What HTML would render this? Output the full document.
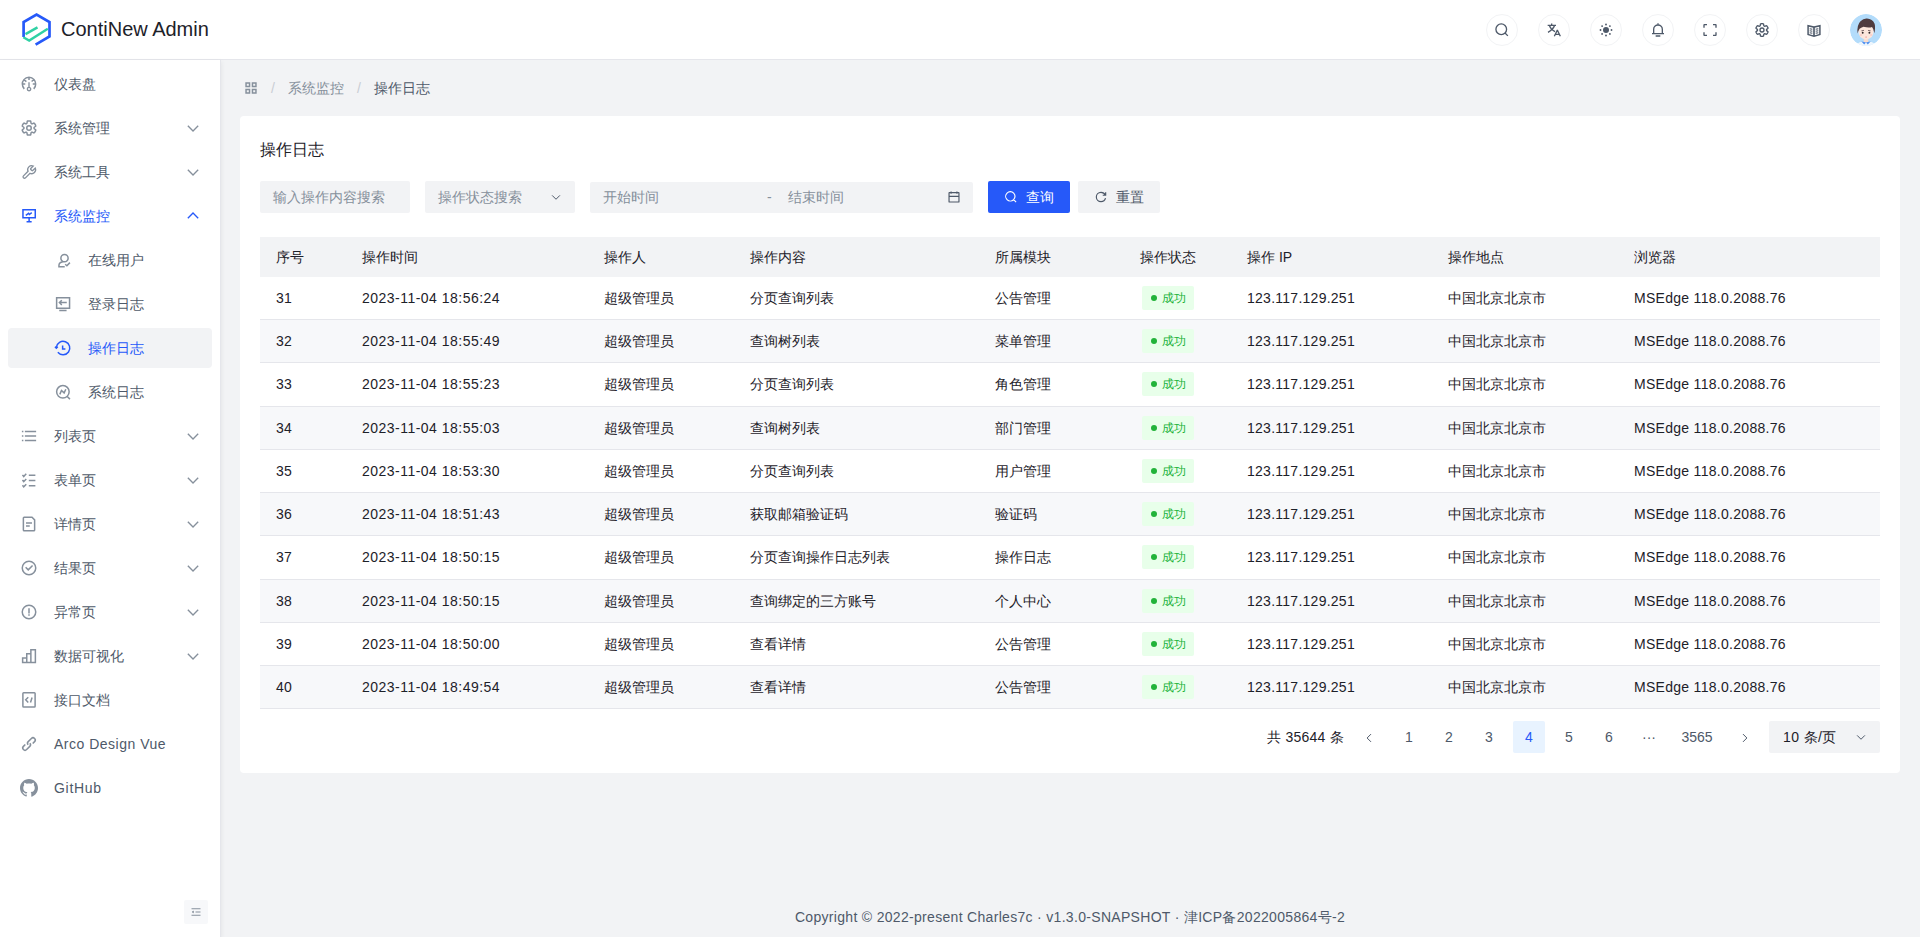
<!DOCTYPE html>
<html><head><meta charset="utf-8">
<style>
*{box-sizing:border-box;margin:0;padding:0}
html,body{width:1920px;height:937px;overflow:hidden;background:#f2f3f5;font-family:"Liberation Sans",sans-serif;font-size:14px;color:#1d2129}
.abs{position:absolute}
svg.ic{position:absolute;fill:none;stroke:currentColor;stroke-width:4}
#header{position:absolute;left:0;top:0;width:1920px;height:60px;background:#fff;border-bottom:1px solid #e5e6eb}
#sider{position:absolute;left:0;top:60px;width:221px;height:877px;background:#fff;box-shadow:0 2px 5px 0 rgba(0,0,0,.08);border-right:1px solid #e5e6eb}
.mi{position:absolute;left:8px;width:204px;height:40px;border-radius:4px;color:#4e5969}
.mi .t{position:absolute;left:46px;top:9px;line-height:22px;white-space:nowrap}
.mi.sub .t{left:80px}
.mi svg.ic{left:12px;top:11px;width:18px;height:18px;color:#86909c}
.mi.sub svg.ic{left:46px}
.mi svg.arr{left:177px;top:12px;width:16px;height:16px;color:#86909c}
.mi.sel{color:#2659f9}
.mi.sel svg.ic,.mi.sel svg.arr{color:#2659f9}
.mi.act{background:#f2f3f5}
.hbtn{position:absolute;top:14px;width:32px;height:32px;border-radius:50%;border:1px solid #f2f3f5;background:#fff;color:#4e5969}
.hbtn svg{position:absolute;left:7px;top:7px;width:16px;height:16px;fill:none;stroke:currentColor;stroke-width:4}
#card{position:absolute;left:240px;top:116px;width:1660px;height:657px;background:#fff;border-radius:4px}
.inp{position:absolute;top:181px;height:32px;background:#f2f3f5;border-radius:2px;color:#86909c}
.inp .t{position:absolute;top:5px;line-height:22px;white-space:nowrap}
.th-t{font-weight:500}
.th{position:absolute;top:237px;height:40px;left:260px;width:1620px;background:#f2f3f5}
.c{position:absolute;white-space:nowrap;line-height:22px}
.row{position:absolute;left:260px;width:1620px;border-bottom:1px solid #e5e6eb}
.row.odd{background:#f7f8fa}
.tag{position:absolute;width:52px;height:24px;background:#e8ffea;color:#22b33a;border-radius:2px;font-size:12px}
.tag i{position:absolute;left:9px;top:9px;width:6px;height:6px;border-radius:50%;background:#22b33a}
.tag span{position:absolute;left:19.5px;top:1px;line-height:22px}
.pg{position:absolute;top:721px;height:32px;line-height:32px;text-align:center;color:#4e5969;border-radius:2px}
</style></head><body>

<div id="header">
  <svg class="abs" style="left:20px;top:11px" width="34" height="37" viewBox="20 11 34 37">
    <path d="M23.6 37 V22.1 L36.55 14.6 L49.5 22.1 V36.5 L35.6 44.6" fill="none" stroke="#2659f9" stroke-width="2.7" stroke-linejoin="miter"/>
    <path d="M23.3 37.3 L29.2 40.5 L47.8 28.7" fill="none" stroke="#2fd1a4" stroke-width="2.4"/>
    <path d="M25.5 34.1 L37.5 27.4" fill="none" stroke="#2fd1a4" stroke-width="2.4"/>
  </svg>
  <div class="abs" style="left:61px;top:16px;font-size:20px;line-height:26px;color:#1d2129">ContiNew Admin</div>

  <div class="hbtn" style="left:1486px"><svg viewBox="0 0 48 48"><path d="M33.072 33.071c6.248-6.248 6.248-16.379 0-22.627-6.249-6.249-16.38-6.249-22.628 0-6.248 6.248-6.248 16.379 0 22.627 6.248 6.248 16.38 6.248 22.628 0Zm0 0 8.485 8.485"/></svg></div>
  <div class="hbtn" style="left:1538px"><svg viewBox="0 0 48 48"><path d="M17 4.5v5.5M5 10h25M10 10c2.5 8 8 14 17 19M26 10c-3 9-9 15-20 21M25 43l8.5-17.5h1L43 43M28.5 37h11"/></svg></div>
  <div class="hbtn" style="left:1590px"><svg viewBox="0 0 48 48"><g style="stroke:none;fill:currentColor"><circle cx="24" cy="24" r="9"/><circle cx="24" cy="7.5" r="2.8"/><circle cx="24" cy="40.5" r="2.8"/><circle cx="7.5" cy="24" r="2.8"/><circle cx="40.5" cy="24" r="2.8"/><circle cx="12.3" cy="12.3" r="2.8"/><circle cx="35.7" cy="12.3" r="2.8"/><circle cx="12.3" cy="35.7" r="2.8"/><circle cx="35.7" cy="35.7" r="2.8"/></g></svg></div>
  <div class="hbtn" style="left:1642px"><svg viewBox="0 0 48 48"><path d="M24 9c7.18 0 13 5.82 13 13v13H11V22c0-7.18 5.82-13 13-13Zm0 0V4M6 35h36m-25 7h14"/></svg></div>
  <div class="hbtn" style="left:1694px"><svg viewBox="0 0 48 48"><path d="M42 17V9a1 1 0 0 0-1-1h-8M6 17V9a1 1 0 0 1 1-1h8m27 23v8a1 1 0 0 1-1 1h-8M6 31v8a1 1 0 0 0 1 1h8"/></svg></div>
  <div class="hbtn" style="left:1746px"><svg viewBox="0 0 48 48"><path d="M24.0 5.1 L24.7 5.1 L25.3 5.1 L26.0 5.2 L26.6 5.3 L27.3 5.4 L27.9 5.5 L28.5 5.9 L28.8 7.3 L29.0 8.5 L29.2 9.8 L29.3 10.8 L29.6 11.5 L30.0 11.7 L30.4 11.9 L30.9 12.1 L31.3 12.4 L31.7 12.6 L32.1 12.9 L32.7 12.8 L33.7 12.4 L34.9 11.9 L36.1 11.5 L37.4 11.1 L38.0 11.4 L38.5 11.9 L38.9 12.4 L39.3 12.9 L39.7 13.4 L40.0 14.0 L40.4 14.5 L40.7 15.1 L41.0 15.7 L41.3 16.3 L41.5 16.9 L41.8 17.5 L42.0 18.2 L41.9 18.9 L40.9 19.8 L39.9 20.6 L38.9 21.4 L38.1 22.0 L37.6 22.6 L37.7 23.0 L37.7 23.5 L37.7 24.0 L37.7 24.5 L37.7 25.0 L37.6 25.4 L38.1 26.0 L38.9 26.6 L39.9 27.4 L40.9 28.2 L41.9 29.1 L42.0 29.8 L41.8 30.5 L41.5 31.1 L41.3 31.7 L41.0 32.3 L40.7 32.9 L40.4 33.4 L40.0 34.0 L39.7 34.6 L39.3 35.1 L38.9 35.6 L38.5 36.1 L38.0 36.6 L37.4 36.9 L36.1 36.5 L34.9 36.1 L33.7 35.6 L32.7 35.2 L32.1 35.1 L31.7 35.4 L31.3 35.6 L30.9 35.9 L30.4 36.1 L30.0 36.3 L29.6 36.5 L29.3 37.2 L29.2 38.2 L29.0 39.5 L28.8 40.7 L28.5 42.1 L27.9 42.5 L27.3 42.6 L26.6 42.7 L26.0 42.8 L25.3 42.9 L24.7 42.9 L24.0 42.9 L23.3 42.9 L22.7 42.9 L22.0 42.8 L21.4 42.7 L20.7 42.6 L20.1 42.5 L19.5 42.1 L19.2 40.7 L19.0 39.5 L18.8 38.2 L18.7 37.2 L18.4 36.5 L18.0 36.3 L17.6 36.1 L17.1 35.9 L16.7 35.6 L16.3 35.4 L15.9 35.1 L15.3 35.2 L14.3 35.6 L13.1 36.1 L11.9 36.5 L10.6 36.9 L10.0 36.6 L9.5 36.1 L9.1 35.6 L8.7 35.1 L8.3 34.6 L8.0 34.0 L7.6 33.5 L7.3 32.9 L7.0 32.3 L6.7 31.7 L6.5 31.1 L6.2 30.5 L6.0 29.8 L6.1 29.1 L7.1 28.2 L8.1 27.4 L9.1 26.6 L9.9 26.0 L10.4 25.4 L10.3 25.0 L10.3 24.5 L10.3 24.0 L10.3 23.5 L10.3 23.0 L10.4 22.6 L9.9 22.0 L9.1 21.4 L8.1 20.6 L7.1 19.8 L6.1 18.9 L6.0 18.2 L6.2 17.5 L6.5 16.9 L6.7 16.3 L7.0 15.7 L7.3 15.1 L7.6 14.5 L8.0 14.0 L8.3 13.4 L8.7 12.9 L9.1 12.4 L9.5 11.9 L10.0 11.4 L10.6 11.1 L11.9 11.5 L13.1 11.9 L14.3 12.4 L15.3 12.8 L15.9 12.9 L16.3 12.6 L16.7 12.4 L17.1 12.1 L17.6 11.9 L18.0 11.7 L18.4 11.5 L18.7 10.8 L18.8 9.8 L19.0 8.5 L19.2 7.3 L19.5 5.9 L20.1 5.5 L20.7 5.4 L21.4 5.3 L22.0 5.2 L22.7 5.1 L23.3 5.1Z"/><circle cx="24" cy="24" r="6"/></svg></div>
  <div class="hbtn" style="left:1798px"><svg viewBox="0 0 48 48"><path style="stroke:none;fill:currentColor" d="M4 8l20 5 20-5v31l-20 6-20-6Z"/><path style="stroke:#fff;stroke-width:0;fill:#fff" d="M8.5 14l13 3.5v22l-13-3.5ZM39.5 14l-13 3.5v22l13-3.5Z"/><path style="stroke-width:3.2" d="M11 20l8 2M11 26l8 2M11 32l8 2M37 20l-8 2M37 26l-8 2M37 32l-8 2"/></svg></div>
  <svg class="abs" style="left:1850px;top:14px" width="32" height="32" viewBox="0 0 32 32">
    <defs><clipPath id="avc"><circle cx="16" cy="16" r="16"/></clipPath></defs>
    <g clip-path="url(#avc)">
    <circle cx="16" cy="16" r="16" fill="#b3dcfb"/>
    <path d="M5 34 Q6 29 12 27.5 L16 28.5 L20 27.5 Q26 29 27 34Z" fill="#eef6fd"/>
    <rect x="13.8" y="23" width="4.4" height="5.5" fill="#f9dccd"/>
    <path d="M11.2 27.3 L16 28.6 L14.2 30.4Z M20.8 27.3 L16 28.6 L17.8 30.4Z" fill="#4f8ff0"/>
    <path d="M8.4 17 Q8.2 24 16 25.8 Q23.8 24 23.6 17 Q23.6 11 16 11 Q8.4 11 8.4 17Z" fill="#fce6dc"/>
    <path d="M7.6 19.5 Q6.6 11 10.5 7.2 Q13.5 4.3 17 4.6 Q22.5 5 24.6 9.8 Q25.6 13 24.4 19.2 Q23.6 14.6 22 13 Q19 14.3 13.5 12.8 Q10.8 14 9.6 14.8 Q8.4 16.5 7.6 19.5Z" fill="#4f3b3f"/>
    <path d="M11.4 16.8 L14 16.4 M18 16.4 L20.6 16.8" stroke="#4f3b3f" stroke-width="0.7"/>
    <circle cx="12.7" cy="18.7" r="0.95" fill="#2f2424"/><circle cx="19.4" cy="18.7" r="0.95" fill="#2f2424"/>
    <ellipse cx="11" cy="21" rx="1.3" ry="0.7" fill="#f7c6c4"/><ellipse cx="21.1" cy="21" rx="1.3" ry="0.7" fill="#f7c6c4"/>
    <ellipse cx="16.1" cy="23" rx="0.9" ry="0.55" fill="#f08d8d"/>
    </g>
  </svg>
</div>

<div id="sider"></div>
<div id="menu">
<div class="mi " style="top:64px"><svg class="ic" viewBox="0 0 48 48"><path d="M41.808 24c.118 4.63-1.486 9.333-5.21 13m5.21-13H34m7.808 0c-.112-4.38-1.767-8.694-4.627-12M24 6c5.531 0 10.07 2.404 13.18 6M24 6c-5.724 0-10.384 2.574-13.5 6.38M24 6v7.5M37.18 12 31 17.5m-20.5-5.12L17 17.5m-6.5-5.12C7.49 16.062 6 20.02 6.19 24M6.19 24H14m-7.81 0c.118 4.63 1.67 9.334 5.21 13"/><path d="M24 42a4.5 4.5 0 1 0 0-9 4.5 4.5 0 0 0 0 9Zm0-9V19" style="stroke-width:3.6"/></svg><div class="t" style="letter-spacing:0">仪表盘</div></div>
<div class="mi " style="top:108px"><svg class="ic" viewBox="0 0 48 48"><path d="M24.0 5.1 L24.7 5.1 L25.3 5.1 L26.0 5.2 L26.6 5.3 L27.3 5.4 L27.9 5.5 L28.5 5.9 L28.8 7.3 L29.0 8.5 L29.2 9.8 L29.3 10.8 L29.6 11.5 L30.0 11.7 L30.4 11.9 L30.9 12.1 L31.3 12.4 L31.7 12.6 L32.1 12.9 L32.7 12.8 L33.7 12.4 L34.9 11.9 L36.1 11.5 L37.4 11.1 L38.0 11.4 L38.5 11.9 L38.9 12.4 L39.3 12.9 L39.7 13.4 L40.0 14.0 L40.4 14.5 L40.7 15.1 L41.0 15.7 L41.3 16.3 L41.5 16.9 L41.8 17.5 L42.0 18.2 L41.9 18.9 L40.9 19.8 L39.9 20.6 L38.9 21.4 L38.1 22.0 L37.6 22.6 L37.7 23.0 L37.7 23.5 L37.7 24.0 L37.7 24.5 L37.7 25.0 L37.6 25.4 L38.1 26.0 L38.9 26.6 L39.9 27.4 L40.9 28.2 L41.9 29.1 L42.0 29.8 L41.8 30.5 L41.5 31.1 L41.3 31.7 L41.0 32.3 L40.7 32.9 L40.4 33.4 L40.0 34.0 L39.7 34.6 L39.3 35.1 L38.9 35.6 L38.5 36.1 L38.0 36.6 L37.4 36.9 L36.1 36.5 L34.9 36.1 L33.7 35.6 L32.7 35.2 L32.1 35.1 L31.7 35.4 L31.3 35.6 L30.9 35.9 L30.4 36.1 L30.0 36.3 L29.6 36.5 L29.3 37.2 L29.2 38.2 L29.0 39.5 L28.8 40.7 L28.5 42.1 L27.9 42.5 L27.3 42.6 L26.6 42.7 L26.0 42.8 L25.3 42.9 L24.7 42.9 L24.0 42.9 L23.3 42.9 L22.7 42.9 L22.0 42.8 L21.4 42.7 L20.7 42.6 L20.1 42.5 L19.5 42.1 L19.2 40.7 L19.0 39.5 L18.8 38.2 L18.7 37.2 L18.4 36.5 L18.0 36.3 L17.6 36.1 L17.1 35.9 L16.7 35.6 L16.3 35.4 L15.9 35.1 L15.3 35.2 L14.3 35.6 L13.1 36.1 L11.9 36.5 L10.6 36.9 L10.0 36.6 L9.5 36.1 L9.1 35.6 L8.7 35.1 L8.3 34.6 L8.0 34.0 L7.6 33.5 L7.3 32.9 L7.0 32.3 L6.7 31.7 L6.5 31.1 L6.2 30.5 L6.0 29.8 L6.1 29.1 L7.1 28.2 L8.1 27.4 L9.1 26.6 L9.9 26.0 L10.4 25.4 L10.3 25.0 L10.3 24.5 L10.3 24.0 L10.3 23.5 L10.3 23.0 L10.4 22.6 L9.9 22.0 L9.1 21.4 L8.1 20.6 L7.1 19.8 L6.1 18.9 L6.0 18.2 L6.2 17.5 L6.5 16.9 L6.7 16.3 L7.0 15.7 L7.3 15.1 L7.6 14.5 L8.0 14.0 L8.3 13.4 L8.7 12.9 L9.1 12.4 L9.5 11.9 L10.0 11.4 L10.6 11.1 L11.9 11.5 L13.1 11.9 L14.3 12.4 L15.3 12.8 L15.9 12.9 L16.3 12.6 L16.7 12.4 L17.1 12.1 L17.6 11.9 L18.0 11.7 L18.4 11.5 L18.7 10.8 L18.8 9.8 L19.0 8.5 L19.2 7.3 L19.5 5.9 L20.1 5.5 L20.7 5.4 L21.4 5.3 L22.0 5.2 L22.7 5.1 L23.3 5.1Z"/><circle cx="24" cy="24" r="6"/></svg><div class="t" style="letter-spacing:0">系统管理</div><svg class="ic arr" viewBox="0 0 48 48"><path d="M39.6 17.443 24.043 33 8.487 17.443"/></svg></div>
<div class="mi " style="top:152px"><svg class="ic" viewBox="0 0 48 48"><path transform="translate(24 24) scale(.88) translate(-24 -23)" d="M29.4 12.6a2 2 0 0 0 0 2.8l3.2 3.2a2 2 0 0 0 2.8 0l7.54-7.54a12 12 0 0 1-15.88 15.88L13.24 40.76a4.24 4.24 0 0 1-6-6L21.06 20.94A12 12 0 0 1 36.94 5.06L29.42 12.58Z"/></svg><div class="t" style="letter-spacing:0">系统工具</div><svg class="ic arr" viewBox="0 0 48 48"><path d="M39.6 17.443 24.043 33 8.487 17.443"/></svg></div>
<div class="mi sel" style="top:196px"><svg class="ic" viewBox="0 0 48 48"><path d="M7.9 7.3h32.8v21.4H7.9zM24.3 28.7v10.5M17.5 39.2h13.6M15.5 22.2l7.4-5.2 2.2 3 6.2-4.8"/></svg><div class="t" style="letter-spacing:0">系统监控</div><svg class="ic arr" viewBox="0 0 48 48"><path d="M39.6 30.557 24.043 15 8.487 30.557"/></svg></div>
<div class="mi sub" style="top:240px"><svg class="ic" viewBox="0 0 48 48"><path d="M18.3 19.2a9.7 9.7 0 1 0 19.4 0a9.7 9.7 0 1 0-19.4 0M23.5 28.8C17 30 13.2 34.5 13.2 38.5V42.2H28.6M29.8 35.2l4.6 4.2 8-8.4"/></svg><div class="t" style="letter-spacing:0">在线用户</div></div>
<div class="mi sub" style="top:284px"><svg class="ic" viewBox="0 0 48 48"><path d="M7 7.5h34.5v27.5H7zM14 41h19.5M34 20.2H15M20.8 13.8l-6.4 6.4 6.4 6.4"/></svg><div class="t" style="letter-spacing:0">登录日志</div></div>
<div class="mi sub sel act" style="top:328px"><svg class="ic" viewBox="0 0 48 48"><path d="M6.2 22.2A18 18 0 1 1 10.2 35.6M2.6 20.4l3.6 4.2 3.8-4.2M23 17.2v9.4h7.4"/></svg><div class="t" style="letter-spacing:0">操作日志</div></div>
<div class="mi sub" style="top:372px"><svg class="ic" viewBox="0 0 48 48"><path d="M7 23.5a16.7 16.7 0 1 0 33.4 0a16.7 16.7 0 1 0-33.4 0M36 36.5l6.5 6.5M15.5 30.4l4.5-10.4 7 6.4 4.5-9.6"/></svg><div class="t" style="letter-spacing:0">系统日志</div></div>
<div class="mi " style="top:416px"><svg class="ic" viewBox="0 0 48 48"><path d="M13 24h30M5 12h4m4 24h30M13 12h30M5 24h4M5 36h4"/></svg><div class="t" style="letter-spacing:0">列表页</div><svg class="ic arr" viewBox="0 0 48 48"><path d="M39.6 17.443 24.043 33 8.487 17.443"/></svg></div>
<div class="mi " style="top:460px"><svg class="ic" viewBox="0 0 48 48"><path d="M23.5 11.5h17.5M23.5 25.3h17.5M23.5 39.1h17.5M6.6 10.4l3.3 4.3 6.8-7.2M6.6 24.2l3.3 4.3 6.8-7.2M6.6 38l3.3 4.3 6.8-7.2"/></svg><div class="t" style="letter-spacing:0">表单页</div><svg class="ic arr" viewBox="0 0 48 48"><path d="M39.6 17.443 24.043 33 8.487 17.443"/></svg></div>
<div class="mi " style="top:504px"><svg class="ic" viewBox="0 0 48 48"><path d="M16 21h16m-16 8h10m11 13H11a2 2 0 0 1-2-2V8a2 2 0 0 1 2-2h21l7 7v27a2 2 0 0 1-2 2Z"/></svg><div class="t" style="letter-spacing:0">详情页</div><svg class="ic arr" viewBox="0 0 48 48"><path d="M39.6 17.443 24.043 33 8.487 17.443"/></svg></div>
<div class="mi " style="top:548px"><svg class="ic" viewBox="0 0 48 48"><path d="m15 22 7 7 11.5-11.5M42 24c0 9.941-8.059 18-18 18S6 33.941 6 24 14.059 6 24 6s18 8.059 18 18Z"/></svg><div class="t" style="letter-spacing:0">结果页</div><svg class="ic arr" viewBox="0 0 48 48"><path d="M39.6 17.443 24.043 33 8.487 17.443"/></svg></div>
<div class="mi " style="top:592px"><svg class="ic" viewBox="0 0 48 48"><path d="M24 28V14m0 16v4M6 24c0-9.941 8.059-18 18-18s18 8.059 18 18-8.059 18-18 18S6 33.941 6 24Z"/></svg><div class="t" style="letter-spacing:0">异常页</div><svg class="ic arr" viewBox="0 0 48 48"><path d="M39.6 17.443 24.043 33 8.487 17.443"/></svg></div>
<div class="mi " style="top:636px"><svg class="ic" viewBox="0 0 48 48"><path d="M41 7H29v34h12V7ZM29 18H18v23h11V18ZM18 29H7v12h11V29Z"/></svg><div class="t" style="letter-spacing:0">数据可视化</div><svg class="ic arr" viewBox="0 0 48 48"><path d="M39.6 17.443 24.043 33 8.487 17.443"/></svg></div>
<div class="mi " style="top:680px"><svg class="ic" viewBox="0 0 48 48"><path d="M7.7 6.9a2 2 0 0 1 2-2h28.6a2 2 0 0 1 2 2v33.6a2 2 0 0 1-2 2H9.7a2 2 0 0 1-2-2ZM22 16.5l-6.8 7 6.8 7.2M32.2 17.3l-4.2 13.4"/></svg><div class="t" style="letter-spacing:0">接口文档</div></div>
<div class="mi " style="top:724px"><svg class="ic" viewBox="0 0 48 48"><path d="m14.1 25.414-4.95 4.95a6 6 0 0 0 8.486 8.485l8.485-8.485a6 6 0 0 0 0-8.485m7.779.707 4.95-4.95a6 6 0 1 0-8.486-8.485l-8.485 8.485a6 6 0 0 0 0 8.485"/></svg><div class="t" style="letter-spacing:.5px">Arco Design Vue</div></div>
<div class="mi " style="top:768px"><svg class="ic" style="stroke:none;fill:currentColor;left:12px;top:11px;width:18px;height:18px" viewBox="4 4 40 40"><path d="M24 4C12.95 4 4 12.95 4 24c0 8.84 5.73 16.34 13.68 18.99 1 .18 1.37-.43 1.37-.96v-3.39c-5.56 1.2-6.73-2.36-6.73-2.36-.91-2.31-2.22-2.93-2.22-2.93-1.82-1.24.14-1.22.14-1.22 2 .14 3.06 2.06 3.06 2.06 1.78 3.06 4.68 2.17 5.82 1.66.18-1.29.7-2.17 1.27-2.67-4.44-.5-9.11-2.22-9.11-9.88 0-2.18.78-3.97 2.06-5.37-.21-.5-.89-2.54.2-5.29 0 0 1.68-.54 5.5 2.05 1.6-.44 3.31-.67 5.01-.67 1.7 0 3.41.23 5.01.67 3.82-2.59 5.5-2.05 5.5-2.05 1.09 2.75.4 4.79.2 5.29 1.28 1.4 2.06 3.19 2.06 5.37 0 7.68-4.68 9.37-9.13 9.87.72.62 1.36 1.84 1.36 3.71v5.5c0 .53.36 1.15 1.38.96C38.28 40.33 44 32.84 44 24 44 12.95 35.05 4 24 4Z"/></svg><div class="t" style="letter-spacing:.7px">GitHub</div></div>
<div class="abs" style="left:184px;top:900px;width:24px;height:24px;background:#f7f8fa;border-radius:2px"><svg class="ic" viewBox="0 0 48 48" style="left:6px;top:6px;width:12px;height:12px;color:#86909c"><path d="M42 11H6M42 24H22M42 37H6M13.66 26.912l-4.82-3.118 4.82-3.118v6.236Z"/></svg></div>
</div><!--endmenu-->

<!-- breadcrumb -->
<svg class="ic" style="left:244px;top:81px;width:14px;height:14px;color:#86909c;stroke-width:5" viewBox="0 0 48 48"><path d="M7 7h12v12H7zM29 7h12v12H29zM7 29h12v12H7zM29 29h12v12H29z"/></svg>
<div class="c" style="left:271px;top:77px;color:#c9cdd4">/</div>
<div class="c" style="left:288px;top:77px;color:#86909c">系统监控</div>
<div class="c" style="left:357px;top:77px;color:#c9cdd4">/</div>
<div class="c" style="left:374px;top:77px;color:#4e5969">操作日志</div>

<div id="card"></div>
<div class="c" style="left:260px;top:138px;font-size:16px;line-height:24px;color:#1d2129">操作日志</div>

<!--table-->
<div class="inp" style="left:260px;width:150px"><div class="t" style="left:13px">输入操作内容搜索</div></div>
<div class="inp" style="left:425px;width:150px"><div class="t" style="left:13px">操作状态搜索</div><svg class="ic" viewBox="0 0 48 48" style="left:125px;top:10px;width:12px;height:12px;color:#4e5969"><path d="M39.6 17.443 24.043 33 8.487 17.443"/></svg></div>
<div class="inp" style="left:590px;width:383px;top:182px;height:31px"><div class="t" style="left:13px;top:4px">开始时间</div><div class="t" style="left:177px;top:4px">-</div><div class="t" style="left:198px;top:4px">结束时间</div><svg class="ic" viewBox="0 0 48 48" style="left:357px;top:8px;width:14px;height:14px;color:#4e5969"><path d="M7 22h34M14 5v8m20-8v8M8 41h32a1 1 0 0 0 1-1V10a1 1 0 0 0-1-1H8a1 1 0 0 0-1 1v30a1 1 0 0 0 1 1Z"/></svg></div>
<div class="abs" style="left:988px;top:181px;width:82px;height:32px;background:#2659f9;border-radius:2px;color:#fff"><svg class="ic" viewBox="0 0 48 48" style="left:16px;top:9px;width:14px;height:14px"><path d="M33.072 33.071c6.248-6.248 6.248-16.379 0-22.627-6.249-6.249-16.38-6.249-22.628 0-6.248 6.248-6.248 16.379 0 22.627 6.248 6.248 16.38 6.248 22.628 0Zm0 0 8.485 8.485"/></svg><div class="c" style="left:38px;top:5px">查询</div></div>
<div class="abs" style="left:1078px;top:181px;width:82px;height:32px;background:#f2f3f5;border-radius:2px;color:#4e5969"><svg class="ic" viewBox="0 0 48 48" style="left:16px;top:9px;width:14px;height:14px"><path d="M38.837 18C36.463 12.136 30.715 8 24 8 15.163 8 8 15.163 8 24s7.163 16 16 16c7.455 0 13.72-5.1 15.496-12M40 8v10H30"/></svg><div class="c" style="left:38px;top:5px">重置</div></div>
<div class="th"></div>
<div class="c th-t" style="left:276px;top:246px">序号</div>
<div class="c th-t" style="left:362px;top:246px">操作时间</div>
<div class="c th-t" style="left:604px;top:246px">操作人</div>
<div class="c th-t" style="left:750px;top:246px">操作内容</div>
<div class="c th-t" style="left:995px;top:246px">所属模块</div>
<div class="c th-t" style="left:1140px;top:246px">操作状态</div>
<div class="c th-t" style="left:1247px;top:246px">操作 <span style="font-weight:400">IP</span></div>
<div class="c th-t" style="left:1448px;top:246px">操作地点</div>
<div class="c th-t" style="left:1634px;top:246px">浏览器</div>
<div class="row" style="top:277.00px;height:43.22px"></div>
<div class="c td" style="left:276px;top:287.00px;letter-spacing:.3px">31</div>
<div class="c td" style="left:362px;top:287.00px;letter-spacing:.48px">2023-11-04 18:56:24</div>
<div class="c td" style="left:604px;top:287.00px;letter-spacing:0">超级管理员</div>
<div class="c td" style="left:750px;top:287.00px;letter-spacing:0">分页查询列表</div>
<div class="c td" style="left:995px;top:287.00px;letter-spacing:0">公告管理</div>
<div class="tag" style="left:1142px;top:286.00px"><i></i><span>成功</span></div>
<div class="c td" style="left:1247px;top:287.00px;letter-spacing:.26px">123.117.129.251</div>
<div class="c td" style="left:1448px;top:287.00px;letter-spacing:0">中国北京北京市</div>
<div class="c td" style="left:1634px;top:287.00px;letter-spacing:.29px">MSEdge 118.0.2088.76</div>
<div class="row odd" style="top:320.22px;height:43.22px"></div>
<div class="c td" style="left:276px;top:330.22px;letter-spacing:.3px">32</div>
<div class="c td" style="left:362px;top:330.22px;letter-spacing:.48px">2023-11-04 18:55:49</div>
<div class="c td" style="left:604px;top:330.22px;letter-spacing:0">超级管理员</div>
<div class="c td" style="left:750px;top:330.22px;letter-spacing:0">查询树列表</div>
<div class="c td" style="left:995px;top:330.22px;letter-spacing:0">菜单管理</div>
<div class="tag" style="left:1142px;top:329.22px"><i></i><span>成功</span></div>
<div class="c td" style="left:1247px;top:330.22px;letter-spacing:.26px">123.117.129.251</div>
<div class="c td" style="left:1448px;top:330.22px;letter-spacing:0">中国北京北京市</div>
<div class="c td" style="left:1634px;top:330.22px;letter-spacing:.29px">MSEdge 118.0.2088.76</div>
<div class="row" style="top:363.44px;height:43.22px"></div>
<div class="c td" style="left:276px;top:373.44px;letter-spacing:.3px">33</div>
<div class="c td" style="left:362px;top:373.44px;letter-spacing:.48px">2023-11-04 18:55:23</div>
<div class="c td" style="left:604px;top:373.44px;letter-spacing:0">超级管理员</div>
<div class="c td" style="left:750px;top:373.44px;letter-spacing:0">分页查询列表</div>
<div class="c td" style="left:995px;top:373.44px;letter-spacing:0">角色管理</div>
<div class="tag" style="left:1142px;top:372.44px"><i></i><span>成功</span></div>
<div class="c td" style="left:1247px;top:373.44px;letter-spacing:.26px">123.117.129.251</div>
<div class="c td" style="left:1448px;top:373.44px;letter-spacing:0">中国北京北京市</div>
<div class="c td" style="left:1634px;top:373.44px;letter-spacing:.29px">MSEdge 118.0.2088.76</div>
<div class="row odd" style="top:406.66px;height:43.22px"></div>
<div class="c td" style="left:276px;top:416.66px;letter-spacing:.3px">34</div>
<div class="c td" style="left:362px;top:416.66px;letter-spacing:.48px">2023-11-04 18:55:03</div>
<div class="c td" style="left:604px;top:416.66px;letter-spacing:0">超级管理员</div>
<div class="c td" style="left:750px;top:416.66px;letter-spacing:0">查询树列表</div>
<div class="c td" style="left:995px;top:416.66px;letter-spacing:0">部门管理</div>
<div class="tag" style="left:1142px;top:415.66px"><i></i><span>成功</span></div>
<div class="c td" style="left:1247px;top:416.66px;letter-spacing:.26px">123.117.129.251</div>
<div class="c td" style="left:1448px;top:416.66px;letter-spacing:0">中国北京北京市</div>
<div class="c td" style="left:1634px;top:416.66px;letter-spacing:.29px">MSEdge 118.0.2088.76</div>
<div class="row" style="top:449.88px;height:43.22px"></div>
<div class="c td" style="left:276px;top:459.88px;letter-spacing:.3px">35</div>
<div class="c td" style="left:362px;top:459.88px;letter-spacing:.48px">2023-11-04 18:53:30</div>
<div class="c td" style="left:604px;top:459.88px;letter-spacing:0">超级管理员</div>
<div class="c td" style="left:750px;top:459.88px;letter-spacing:0">分页查询列表</div>
<div class="c td" style="left:995px;top:459.88px;letter-spacing:0">用户管理</div>
<div class="tag" style="left:1142px;top:458.88px"><i></i><span>成功</span></div>
<div class="c td" style="left:1247px;top:459.88px;letter-spacing:.26px">123.117.129.251</div>
<div class="c td" style="left:1448px;top:459.88px;letter-spacing:0">中国北京北京市</div>
<div class="c td" style="left:1634px;top:459.88px;letter-spacing:.29px">MSEdge 118.0.2088.76</div>
<div class="row odd" style="top:493.10px;height:43.22px"></div>
<div class="c td" style="left:276px;top:503.10px;letter-spacing:.3px">36</div>
<div class="c td" style="left:362px;top:503.10px;letter-spacing:.48px">2023-11-04 18:51:43</div>
<div class="c td" style="left:604px;top:503.10px;letter-spacing:0">超级管理员</div>
<div class="c td" style="left:750px;top:503.10px;letter-spacing:0">获取邮箱验证码</div>
<div class="c td" style="left:995px;top:503.10px;letter-spacing:0">验证码</div>
<div class="tag" style="left:1142px;top:502.10px"><i></i><span>成功</span></div>
<div class="c td" style="left:1247px;top:503.10px;letter-spacing:.26px">123.117.129.251</div>
<div class="c td" style="left:1448px;top:503.10px;letter-spacing:0">中国北京北京市</div>
<div class="c td" style="left:1634px;top:503.10px;letter-spacing:.29px">MSEdge 118.0.2088.76</div>
<div class="row" style="top:536.32px;height:43.22px"></div>
<div class="c td" style="left:276px;top:546.32px;letter-spacing:.3px">37</div>
<div class="c td" style="left:362px;top:546.32px;letter-spacing:.48px">2023-11-04 18:50:15</div>
<div class="c td" style="left:604px;top:546.32px;letter-spacing:0">超级管理员</div>
<div class="c td" style="left:750px;top:546.32px;letter-spacing:0">分页查询操作日志列表</div>
<div class="c td" style="left:995px;top:546.32px;letter-spacing:0">操作日志</div>
<div class="tag" style="left:1142px;top:545.32px"><i></i><span>成功</span></div>
<div class="c td" style="left:1247px;top:546.32px;letter-spacing:.26px">123.117.129.251</div>
<div class="c td" style="left:1448px;top:546.32px;letter-spacing:0">中国北京北京市</div>
<div class="c td" style="left:1634px;top:546.32px;letter-spacing:.29px">MSEdge 118.0.2088.76</div>
<div class="row odd" style="top:579.54px;height:43.22px"></div>
<div class="c td" style="left:276px;top:589.54px;letter-spacing:.3px">38</div>
<div class="c td" style="left:362px;top:589.54px;letter-spacing:.48px">2023-11-04 18:50:15</div>
<div class="c td" style="left:604px;top:589.54px;letter-spacing:0">超级管理员</div>
<div class="c td" style="left:750px;top:589.54px;letter-spacing:0">查询绑定的三方账号</div>
<div class="c td" style="left:995px;top:589.54px;letter-spacing:0">个人中心</div>
<div class="tag" style="left:1142px;top:588.54px"><i></i><span>成功</span></div>
<div class="c td" style="left:1247px;top:589.54px;letter-spacing:.26px">123.117.129.251</div>
<div class="c td" style="left:1448px;top:589.54px;letter-spacing:0">中国北京北京市</div>
<div class="c td" style="left:1634px;top:589.54px;letter-spacing:.29px">MSEdge 118.0.2088.76</div>
<div class="row" style="top:622.76px;height:43.22px"></div>
<div class="c td" style="left:276px;top:632.76px;letter-spacing:.3px">39</div>
<div class="c td" style="left:362px;top:632.76px;letter-spacing:.48px">2023-11-04 18:50:00</div>
<div class="c td" style="left:604px;top:632.76px;letter-spacing:0">超级管理员</div>
<div class="c td" style="left:750px;top:632.76px;letter-spacing:0">查看详情</div>
<div class="c td" style="left:995px;top:632.76px;letter-spacing:0">公告管理</div>
<div class="tag" style="left:1142px;top:631.76px"><i></i><span>成功</span></div>
<div class="c td" style="left:1247px;top:632.76px;letter-spacing:.26px">123.117.129.251</div>
<div class="c td" style="left:1448px;top:632.76px;letter-spacing:0">中国北京北京市</div>
<div class="c td" style="left:1634px;top:632.76px;letter-spacing:.29px">MSEdge 118.0.2088.76</div>
<div class="row odd" style="top:665.98px;height:43.22px"></div>
<div class="c td" style="left:276px;top:675.98px;letter-spacing:.3px">40</div>
<div class="c td" style="left:362px;top:675.98px;letter-spacing:.48px">2023-11-04 18:49:54</div>
<div class="c td" style="left:604px;top:675.98px;letter-spacing:0">超级管理员</div>
<div class="c td" style="left:750px;top:675.98px;letter-spacing:0">查看详情</div>
<div class="c td" style="left:995px;top:675.98px;letter-spacing:0">公告管理</div>
<div class="tag" style="left:1142px;top:674.98px"><i></i><span>成功</span></div>
<div class="c td" style="left:1247px;top:675.98px;letter-spacing:.26px">123.117.129.251</div>
<div class="c td" style="left:1448px;top:675.98px;letter-spacing:0">中国北京北京市</div>
<div class="c td" style="left:1634px;top:675.98px;letter-spacing:.29px">MSEdge 118.0.2088.76</div>
<div class="c" style="left:1267px;top:726px;color:#1d2129"><span style="letter-spacing:.25px">共 35644 条</span></div>
<svg class="ic" viewBox="0 0 48 48" style="left:1363px;top:732px;width:12px;height:12px;color:#4e5969"><path d="M32 8.4 16.444 23.956 32 39.513"/></svg>
<div class="pg" style="left:1393px;width:32px">1</div>
<div class="pg" style="left:1433px;width:32px">2</div>
<div class="pg" style="left:1473px;width:32px">3</div>
<div class="pg" style="left:1513px;width:32px;background:#e8f3ff;color:#2659f9">4</div>
<div class="pg" style="left:1553px;width:32px">5</div>
<div class="pg" style="left:1593px;width:32px">6</div>
<div class="pg" style="left:1633px;width:32px">···</div>
<div class="pg" style="left:1673px;width:48px">3565</div>
<svg class="ic" viewBox="0 0 48 48" style="left:1739px;top:732px;width:12px;height:12px;color:#4e5969"><path d="m16 39.513 15.556-15.557L16 8.4"/></svg>
<div class="abs" style="left:1769px;top:721px;width:111px;height:32px;background:#f2f3f5;border-radius:2px"><div class="c" style="left:14px;top:5px;color:#1d2129;letter-spacing:.4px">10 条/页</div><svg class="ic" viewBox="0 0 48 48" style="left:86px;top:10px;width:12px;height:12px;color:#4e5969"><path d="M39.6 17.443 24.043 33 8.487 17.443"/></svg></div>
<!--endtable-->
<div id="footer" class="c" style="left:220px;width:1700px;text-align:center;top:906px;color:#4e5969;letter-spacing:.31px">Copyright © 2022-present Charles7c · v1.3.0-SNAPSHOT · 津ICP备2022005864号-2</div>

</body></html>
